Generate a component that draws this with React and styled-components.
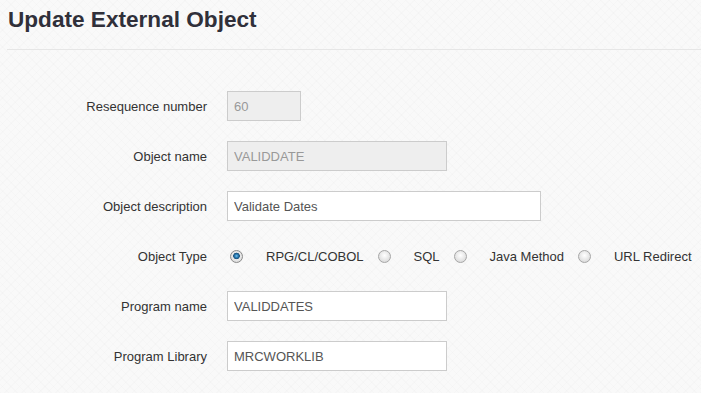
import React from 'react';
import styled, { createGlobalStyle } from 'styled-components';

const GlobalStyle = createGlobalStyle`
  html, body {
    margin: 0;
    padding: 0;
    background: #f9f9f9;
    font-family: "Liberation Sans", Arial, sans-serif;
  }
`;

const Page = styled.div`
  width: 701px;
  height: 393px;
  overflow: hidden;
  background-color: #f9f9f9;
  background-image:
    repeating-linear-gradient(45deg, rgba(0, 0, 0, 0.012) 0 1px, transparent 1px 6px),
    repeating-linear-gradient(-45deg, rgba(0, 0, 0, 0.012) 0 1px, transparent 1px 6px);
`;

const Title = styled.h1`
  margin: 0;
  padding: 7px 0 0 8px;
  height: 49px;
  box-sizing: border-box;
  font-size: 22.6px;
  font-weight: bold;
  color: #30303a;
  line-height: 26px;
`;

const Rule = styled.hr`
  margin: 0 0 0 7px;
  border: 0;
  border-top: 1px solid #e6e6e6;
`;

const Form = styled.form`
  padding-top: 31px;
`;

const Row = styled.div`
  display: flex;
  align-items: center;
  height: 50px;
`;

const Label = styled.label`
  width: 207px;
  text-align: right;
  font-size: 13px;
  color: #333;
  margin-right: 20px;
  flex-shrink: 0;
  white-space: nowrap;
`;

const Input = styled.input`
  box-sizing: border-box;
  width: ${(p) => p.$w}px;
  height: 30px;
  margin: 0;
  padding: 0 6px;
  border: 1px solid #ccc;
  background: ${(p) => (p.disabled ? '#eeeeee' : '#fff')};
  color: ${(p) => (p.disabled ? '#999' : '#555')};
  font-family: "Liberation Sans", Arial, sans-serif;
  font-size: 13px;
  outline: none;
`;

const Options = styled.div`
  display: flex;
  align-items: center;
  padding-left: 3px;
  flex-shrink: 0;
  white-space: nowrap;
`;

const Radio = styled.input.attrs({ type: 'radio' })`
  appearance: none;
  flex-shrink: 0;
  width: 13px;
  height: 13px;
  margin: 0 23px 0 0;
  border-radius: 50%;
  border: 1px solid #a6a6a6;
  box-sizing: border-box;
  background: radial-gradient(circle at 50% 40%, #ffffff 0, #e4e4e4 60%, #cfcfcf 100%);

  &:checked {
    border-color: #8a8a8a;
    background: radial-gradient(circle at 50% 45%, #7cc3ec 0, #2a7fb8 1.6px, #1b4f78 3px, #e9e9e9 3.6px, #d4d4d4 100%);
  }
`;

const OptionText = styled.span`
  font-size: 13px;
  color: #333;
  margin-right: 14px;
  flex-shrink: 0;
`;

const types = ['RPG/CL/COBOL', 'SQL', 'Java Method', 'URL Redirect'];

const App = () => (
  <Page>
    <GlobalStyle />
    <Title>Update External Object</Title>
    <Rule />
    <Form>
      <Row>
        <Label>Resequence number</Label>
        <Input $w={74} disabled defaultValue="60" />
      </Row>
      <Row>
        <Label>Object name</Label>
        <Input $w={220} disabled defaultValue="VALIDDATE" />
      </Row>
      <Row>
        <Label>Object description</Label>
        <Input $w={314} defaultValue="Validate Dates" />
      </Row>
      <Row>
        <Label>Object Type</Label>
        <Options>
          {types.map((t, i) => (
            <React.Fragment key={t}>
              <Radio name="objtype" defaultChecked={i === 0} />
              <OptionText>{t}</OptionText>
            </React.Fragment>
          ))}
        </Options>
      </Row>
      <Row>
        <Label>Program name</Label>
        <Input $w={220} defaultValue="VALIDDATES" />
      </Row>
      <Row>
        <Label>Program Library</Label>
        <Input $w={220} defaultValue="MRCWORKLIB" />
      </Row>
    </Form>
  </Page>
);

export default App;
